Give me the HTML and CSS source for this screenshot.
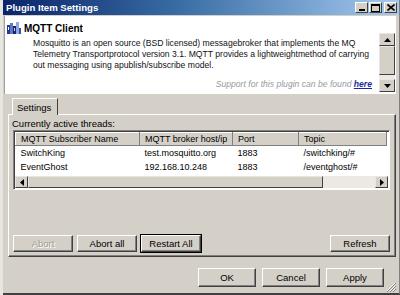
FILE: index.html
```html
<!doctype html>
<html lang="en">
  <head>
    <meta charset="utf-8">
    <title>Plugin Item Settings</title>
    <link rel="stylesheet" href="styles.css">
  </head>
<body>
  <div class="window">
    <div class="titlebar">
      <span class="title">Plugin Item Settings</span>
      <div class="caption-buttons">
        <span class="cbtn"><svg width="8" height="7" viewBox="0 0 8 7"><rect x="1" y="5" width="6" height="2" fill="#000"/></svg></span>
        <span class="cbtn"><svg width="9" height="8" viewBox="0 0 9 8"><rect x="0.5" y="0.5" width="8" height="7" fill="none" stroke="#000"/><rect x="0" y="0" width="9" height="2" fill="#000"/></svg></span>
        <span class="cbtn close"><svg width="8" height="7" viewBox="0 0 8 7"><path d="M0.5 0.5 L7.5 6.5 M7.5 0.5 L0.5 6.5" stroke="#000" stroke-width="1.6"/></svg></span>
      </div>
    </div>

    <div class="info">
      <div class="info-text">
        <div class="plugin-name">
          <svg class="plugin-icon" width="14" height="12" viewBox="0 0 14 12">
            <rect x="0" y="3" width="3" height="9" fill="#2a3a8a"/>
            <rect x="3" y="1" width="3" height="11" fill="#5d78c8"/>
            <rect x="6" y="4" width="3" height="8" fill="#1b2466"/>
            <rect x="9" y="0" width="3" height="12" fill="#8fa6e0"/>
            <rect x="1" y="5" width="1" height="3" fill="#fff"/>
            <rect x="7" y="6" width="1" height="3" fill="#c8d4f4"/>
            <rect x="12" y="6" width="2" height="6" fill="#3c4ea8"/>
          </svg>
          <b>MQTT Client</b>
        </div>
        <p class="desc">Mosquitto is an open source (BSD licensed) messagebroker that implements the MQ<br>Telemetry Transportprotocol version 3.1. MQTT provides a lightweightmethod of carrying<br>out messaging using apublish/subscribe model.</p>
        <p class="support">Support for this plugin can be found <a href="#">here</a></p>
      </div>
      <div class="vscroll">
        <span class="sbtn"><svg width="7" height="4" viewBox="0 0 7 4"><path d="M3.5 0 L7 4 L0 4 Z" fill="#000"/></svg></span>
        <span class="vthumb"></span>
        <span class="vtrack"></span>
        <span class="sbtn"><svg width="7" height="4" viewBox="0 0 7 4"><path d="M0 0 L7 0 L3.5 4 Z" fill="#000"/></svg></span>
      </div>
    </div>

    <div class="dialog">
      <div class="tabs"><span class="tab">Settings</span></div>
      <div class="tabpage">
        <div class="label">Currently active threads:</div>
        <div class="listview">
          <table class="threads">
            <thead>
              <tr><th class="c1">MQTT Subscriber Name</th><th class="c2">MQTT broker host/ip</th><th class="c3">Port</th><th class="c4">Topic</th></tr>
            </thead>
            <tbody>
              <tr><td>SwitchKing</td><td>test.mosquitto.org</td><td>1883</td><td>/switchking/#</td></tr>
              <tr><td>EventGhost</td><td>192.168.10.248</td><td>1883</td><td>/eventghost/#</td></tr>
            </tbody>
          </table>
          <div class="filler"></div>
          <div class="hscroll">
            <span class="sbtn"><svg width="4" height="7" viewBox="0 0 4 7"><path d="M4 0 L4 7 L0 3.5 Z" fill="#000"/></svg></span>
            <span class="hthumb"></span>
            <span class="htrack"></span>
            <span class="sbtn"><svg width="4" height="7" viewBox="0 0 4 7"><path d="M0 0 L4 3.5 L0 7 Z" fill="#000"/></svg></span>
          </div>
        </div>
        <div class="actions">
          <button class="btn" disabled>Abort</button>
          <button class="btn">Abort all</button>
          <button class="btn default">Restart All</button>
          <span class="spacer"></span>
          <button class="btn">Refresh</button>
        </div>
      </div>
      <div class="footer">
        <button class="btn wide">OK</button>
        <button class="btn wide">Cancel</button>
        <button class="btn wide">Apply</button>
        <svg class="grip" width="10" height="10" viewBox="0 0 10 10">
          <path d="M9 1 L1 9 M9 4 L4 9 M9 7 L7 9" stroke="#fff" stroke-width="1"/>
          <path d="M10 1 L1 10 M10 4 L4 10 M10 7 L7 10" stroke="#808080" stroke-width="1"/>
        </svg>
      </div>
    </div>
  </div>
</body>
</html>
```

FILE: styles.css
```css
html, body {
    margin: 0;
    padding: 0;
}

* {
    box-sizing: border-box;
}

body {
    width: 400px;
    height: 295px;
    overflow: hidden;
    background: #e8e6e0;
    font-family: "Liberation Sans", Arial, sans-serif;
    font-size: 9px;
    color: #000;
}

.window {
    margin-left: 3px;
    width: 397px;
    height: 295px;
    background: #d4d0c8;
    border-right: 1px solid #808080;
    border-bottom: 2px solid #404040;
    display: flex;
    flex-direction: column;
}

.titlebar {
    height: 15px;
    flex: none;
    background: linear-gradient(to right, #0a246a 0%, #3a6ea5 45%, #a6caf0 100%);
    display: flex;
    align-items: center;
    padding: 0 2px;
}

.title {
    color: #fff;
    font-weight: bold;
    font-size: 9.6px;
    flex: 1;
    padding-left: 1px;
}

.caption-buttons {
    display: flex;
    gap: 1px;
}

.cbtn {
    width: 13px;
    height: 11px;
    background: #d4d0c8;
    border: 1px solid;
    border-color: #fff #404040 #404040 #fff;
    display: flex;
    align-items: center;
    justify-content: center;
}

.cbtn.close {
    margin-left: 1px;
}

.info {
    height: 78px;
    flex: none;
    margin: 1px 3px 0 1px;
    background: #fff;
    border-left: 1px solid #a0a0a0;
    display: flex;
}

.info-text {
    flex: 1;
    padding: 6px 0 0 2px;
}

.plugin-name {
    display: flex;
    align-items: center;
    gap: 3px;
    font-size: 10px;
}

.desc {
    margin: 4px 0 0 26px;
    font-size: 8.6px;
    line-height: 11px;
    white-space: nowrap;
    color: #111;
}

.support {
    margin: 8px 7px 0 0;
    text-align: right;
    font-style: italic;
    font-size: 8.6px;
    color: #9a9a9a;
}

.support a {
    color: #1a2a9c;
    font-weight: bold;
}

.vscroll {
    width: 16px;
    margin: 17px 1px 0 0;
    display: flex;
    flex-direction: column;
}

.sbtn {
    flex: none;
    width: 16px;
    height: 13px;
    background: #d4d0c8;
    border: 1px solid;
    border-color: #e8e6e0 #404040 #404040 #e8e6e0;
    display: flex;
    align-items: center;
    justify-content: center;
}

.vthumb {
    height: 29px;
    background: #d4d0c8;
    border: 1px solid;
    border-color: #e8e6e0 #404040 #404040 #e8e6e0;
}

.vtrack {
    height: 4px;
    background: #ece9e4;
}

.dialog {
    flex: 1;
    display: flex;
    flex-direction: column;
    padding: 3px 3px 0 5px;
}

.tabs {
    display: flex;
    padding-left: 4px;
    height: 17px;
    align-items: flex-end;
}

.tab {
    height: 17px;
    padding: 0 6px 0 4px;
    border: 1px solid;
    border-color: #fff #404040 transparent #fff;
    border-bottom: none;
    display: flex;
    align-items: center;
    font-size: 9.5px;
    position: relative;
    top: 1px;
    background: #d4d0c8;
}

.tabpage {
    height: 143px;
    flex: none;
    border: 1px solid;
    border-color: #fff #404040 #404040 #fff;
    box-shadow: inset -1px -1px #808080;
    display: flex;
    flex-direction: column;
    padding: 3px 5px 4px 3px;
}

.label {
    font-size: 9.5px;
    height: 12px;
    line-height: 12px;
}

.listview {
    margin-left: 1px;
    height: 60px;
    flex: none;
    border: 1px solid;
    border-color: #808080 #fff #fff #808080;
    box-shadow: inset 1px 1px #404040;
    background: #fff;
    display: flex;
    flex-direction: column;
    padding: 1px 0 0 1px;
    overflow: hidden;
}

.threads {
    border-collapse: collapse;
    width: 372px;
    flex: none;
}

.threads th {
    height: 13px;
    padding: 0 0 0 5px;
    text-align: left;
    font-weight: normal;
    background: #d4d0c8;
    border: 1px solid;
    border-color: #fff #808080 #808080 #fff;
    font-size: 9px;
}

.threads .c1 { width: 124px; }
.threads .c2 { width: 93px; }
.threads .c3 { width: 66px; }

.threads td {
    height: 14px;
    padding: 0 0 0 5px;
    vertical-align: middle;
    line-height: 14px;
}

.filler {
    flex: 1;
}

.hscroll {
    display: flex;
    height: 12px;
    flex: none;
    margin-right: 1px;
    margin-bottom: 1px;
}

.hscroll .sbtn {
    width: 13px;
    height: 12px;
}

.hthumb {
    width: 295px;
    background: #d4d0c8;
    border: 1px solid;
    border-color: #e8e6e0 #404040 #404040 #e8e6e0;
}

.htrack {
    flex: 1;
    background: #ece9e4;
}

.actions {
    margin-top: auto;
    display: flex;
    gap: 4px;
    padding-left: 1px;
}

.spacer {
    flex: 1;
}

.btn {
    font-family: "Liberation Sans", Arial, sans-serif;
    font-size: 9.5px;
    color: #000;
    width: 60px;
    height: 17px;
    padding: 0;
    background: #d4d0c8;
    border: 1px solid;
    border-color: #fff #404040 #404040 #fff;
    box-shadow: inset -1px -1px #808080;
}

.btn:disabled {
    color: #a09c94;
    text-shadow: 1px 1px #fff;
}

.btn.default {
    outline: 1px solid #000;
    outline-offset: 0;
}

.footer {
    display: flex;
    justify-content: flex-end;
    align-items: flex-start;
    gap: 6px;
    padding: 11px 0 0 0;
    position: relative;
    flex: 1;
}

.btn.wide {
    width: 58px;
    height: 19px;
}

.footer .btn:last-of-type {
    margin-right: 12px;
}

.grip {
    position: absolute;
    right: 0;
    bottom: 1px;
}
```
